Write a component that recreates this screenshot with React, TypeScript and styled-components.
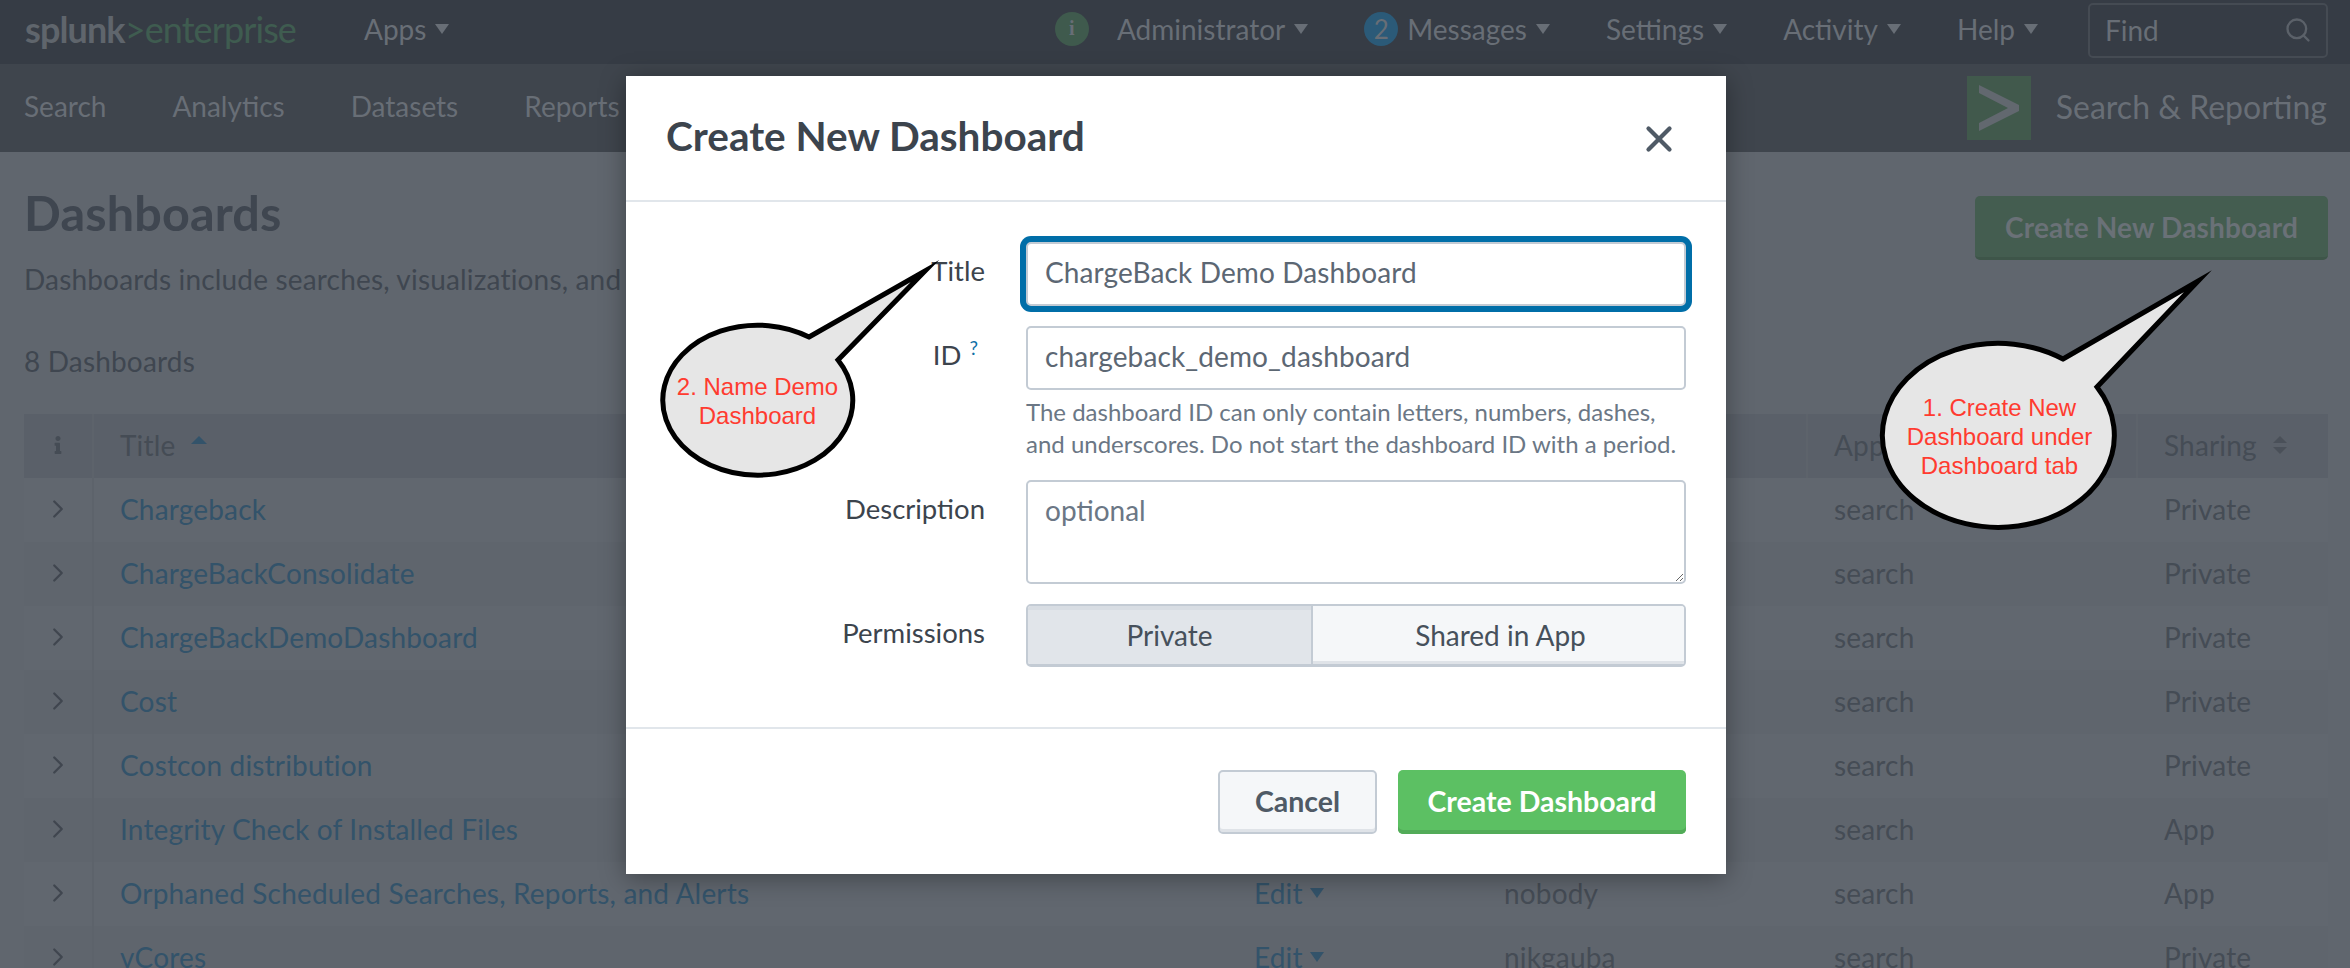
import styled, { createGlobalStyle } from "styled-components";
import { ChevronRight, Search, X } from "lucide-react";
import { FaInfo } from "react-icons/fa";

const GlobalStyle = createGlobalStyle`
  html, body {
    margin: 0;
    padding: 0;
    background: #60666e;
  }
  * { box-sizing: border-box; }
`;

const Page = styled.div`
  position: relative;
  width: 2350px;
  height: 968px;
  overflow: hidden;
  background: #60666e;
  font-family: Lato, "Liberation Sans", sans-serif;
  font-size: 28px;
  color: #3f4650;
`;

const TopBar = styled.div`
  display: flex;
  align-items: center;
  height: 64px;
  padding: 0 22px 7px 25px;
  background: #363c45;
  color: #686e76;
`;

const Logo = styled.div`
  display: flex;
  align-items: baseline;
  width: 339px;
  font-size: 36px;
  letter-spacing: -0.9px;
  font-weight: 700;
  color: #5f656c;
  span {
    color: #3f5c50;
    font-weight: 400;
  }
`;

const MenuItem = styled.div`
  display: flex;
  align-items: center;
  gap: 9px;
`;

const Caret = styled.i<{ $color?: string }>`
  display: block;
  width: 0;
  height: 0;
  border-left: 7px solid transparent;
  border-right: 7px solid transparent;
  border-top: 10px solid ${(p) => p.$color || "#686e76"};
`;

const RightMenu = styled.div`
  display: flex;
  align-items: center;
  gap: 56px;
  margin-left: auto;
`;

const Badge = styled.b<{ $bg: string; $serif?: boolean }>`
  display: flex;
  align-items: center;
  justify-content: center;
  width: 34px;
  height: 34px;
  border-radius: 50%;
  margin-right: ${(p) => (p.$serif ? "19px" : "0")};
  background: ${(p) => p.$bg};
  font-size: ${(p) => (p.$serif ? "20px" : "26px")};
  font-weight: ${(p) => (p.$serif ? 700 : 400)};
  font-family: ${(p) => (p.$serif ? '"Liberation Serif", serif' : "inherit")};
  color: #686e76;
`;

const FindBox = styled.div`
  display: flex;
  align-items: center;
  justify-content: space-between;
  width: 240px;
  height: 55px;
  padding: 0 14px 0 15px;
  border: 2px solid #454b53;
  border-radius: 5px;
  margin: 3px 0 0 -6px;
`;

const AppBar = styled.div`
  display: flex;
  align-items: center;
  height: 88px;
  padding: 0 23px 4px 24px;
  background: #3f454d;
  color: #686e76;
`;

const NavLinks = styled.div`
  display: flex;
  gap: 66px;
`;

const AppBrand = styled.div`
  display: flex;
  align-items: center;
  gap: 25px;
  margin-left: auto;
  font-size: 32px;
`;

const AppMark = styled.div`
  width: 64px;
  height: 64px;
  margin-top: 4px;
  background: #41594c;
  svg {
    display: block;
  }
`;

const Content = styled.div`
  padding: 44px 22px 0 24px;
  letter-spacing: 0.17px;
`;

const HeadRow = styled.div`
  display: flex;
  justify-content: space-between;
  height: 98px;
`;

const Heading = styled.h1`
  margin: -8px 0 0;
  font-size: 48.5px;
  line-height: 48px;
  font-weight: 700;
  color: #3f4650;
`;

const PrimaryHeaderButton = styled.div`
  display: flex;
  align-items: center;
  justify-content: center;
  width: 353px;
  height: 64px;
  border-radius: 5px;
  background: #445d50;
  border-bottom: 3px solid #3e5549;
  color: #6a7177;
  font-weight: 700;
`;

const Intro = styled.p`
  margin: -31px 0 0;
  height: 80px;
  line-height: 32px;
  white-space: nowrap;
`;

const Count = styled.div`
  height: 71px;
  line-height: 36px;
`;

const Cols = "70px 1134px 250px 330px 330px 190px";

const Row = styled.div<{ $head?: boolean; $odd?: boolean }>`
  display: grid;
  grid-template-columns: ${Cols};
  align-items: stretch;
  height: 64px;
  background: ${(p) => (p.$head ? "#5a6069" : p.$odd ? "#61676f" : "#5f656d")};
`;

const Cell = styled.div<{ $link?: boolean; $divider?: boolean; $center?: boolean }>`
  display: flex;
  align-items: center;
  gap: 7px;
  padding: 0 ${(p) => (p.$center ? "0" : "26px")} 3px;
  justify-content: ${(p) => (p.$center ? "center" : "flex-start")};
  color: ${(p) => (p.$link ? "#33536a" : "#454c55")};
  border-right: ${(p) => (p.$divider ? "2px solid #5d636b" : "0")};
  white-space: nowrap;
`;

const SortUp = styled.i`
  display: block;
  width: 0;
  height: 0;
  margin: -10px 0 0 9px;
  border-left: 8px solid transparent;
  border-right: 8px solid transparent;
  border-bottom: 8px solid #33536a;
`;

const SortBoth = styled.span`
  display: flex;
  flex-direction: column;
  gap: 4px;
  margin-left: 9px;
  &::before, &::after {
    content: "";
    display: block;
    width: 0;
    height: 0;
    border-left: 7px solid transparent;
    border-right: 7px solid transparent;
  }
  &::before { border-bottom: 7px solid #4a5059; }
  &::after { border-top: 7px solid #4a5059; }
`;

const Modal = styled.div`
  position: absolute;
  left: 626px;
  top: 76px;
  width: 1100px;
  height: 798px;
  background: #ffffff;
  box-shadow: 0 4px 24px rgba(0, 0, 0, 0.35);
  color: #3c444d;
`;

const ModalHeader = styled.div`
  display: flex;
  align-items: center;
  justify-content: space-between;
  height: 126px;
  padding: 0 46px 0 40px;
  border-bottom: 2px solid #e1e6eb;
  svg {
    margin-top: 2px;
  }
`;

const ModalTitle = styled.h2`
  margin: -5px 0 0;
  font-size: 40.5px;
  font-weight: 700;
  color: #3c444d;
`;

const ModalBody = styled.div`
  display: flex;
  flex-direction: column;
  height: 527px;
  padding: 40px 0 0;
  border-bottom: 2px solid #e1e6eb;
`;

const FormRow = styled.div<{ $gap?: number }>`
  display: grid;
  grid-template-columns: 359px 660px;
  column-gap: 41px;
  margin-bottom: ${(p) => p.$gap ?? 20}px;
`;

const Label = styled.label`
  text-align: right;
  font-size: 27.5px;
  line-height: 32px;
  padding-top: 13px;
  color: #3c444d;
  sup {
    font-size: 19px;
    line-height: 0;
    color: #0f6fa6;
    margin-left: 8px;
    margin-right: 7px;
  }
`;

const TextInput = styled.input<{ $focus?: boolean }>`
  display: block;
  width: 100%;
  height: 64px;
  padding: 0 17px 5px;
  outline: none;
  border: 2px solid #c3cbd4;
  border-radius: 5px;
  background: #fff;
  font: inherit;
  font-size: 28px;
  letter-spacing: 0.12px;
  color: #5c6773;
  box-shadow: ${(p) => (p.$focus ? "0 0 0 6px #006ea8" : "none")};
`;

const TextArea = styled.textarea`
  display: block;
  width: 100%;
  height: 104px;
  padding: 11px 17px;
  outline: none;
  border: 2px solid #c3cbd4;
  border-radius: 5px;
  font: inherit;
  font-size: 28px;
  color: #5c6773;
  &::placeholder {
    color: #6b7785;
    opacity: 1;
  }
`;

const Help = styled.div`
  grid-column: 2;
  margin-top: 6px;
  margin-bottom: 20px;
  font-size: 24px;
  line-height: 32px;
  color: #6b7785;
  white-space: nowrap;
`;

const Toggle = styled.div`
  display: grid;
  grid-template-columns: 285px 375px;
  height: 63px;
  border: 2px solid #c3cbd4;
  border-bottom-width: 3px;
  border-radius: 5px;
  overflow: hidden;
`;

const ToggleOption = styled.div<{ $on?: boolean }>`
  display: flex;
  align-items: center;
  justify-content: center;
  background: ${(p) => (p.$on ? "#e1e5ea" : "#f5f7f9")};
  border-right: ${(p) => (p.$on ? "2px solid #c3cbd4" : "0")};
  box-shadow: ${(p) =>
    p.$on ? "inset 0 4px 0 #d8dde3" : "inset 0 -3px 0 #dfe3e8"};
  color: #46505b;
`;

const ModalFooter = styled.div`
  display: flex;
  justify-content: flex-end;
  gap: 21px;
  padding: 41px 40px 0 0;
`;

const Button = styled.div<{ $primary?: boolean }>`
  display: flex;
  align-items: center;
  justify-content: center;
  width: ${(p) => (p.$primary ? "288px" : "159px")};
  height: 64px;
  padding-bottom: 2px;
  border-radius: 5px;
  font-weight: 700;
  font-size: 28.5px;
  background: ${(p) => (p.$primary ? "#5cc063" : "#f5f7f9")};
  color: ${(p) => (p.$primary ? "#ffffff" : "#4f5a66")};
  border: ${(p) => (p.$primary ? "0" : "2px solid #c3cbd4")};
  box-shadow: ${(p) =>
    p.$primary ? "inset 0 -4px 0 #52ab58" : "inset 0 -3px 0 #dfe3e8"};
`;

const Callout = styled.div<{ $left: number; $top: number; $w: number; $h: number }>`
  position: absolute;
  left: ${(p) => p.$left}px;
  top: ${(p) => p.$top}px;
  width: ${(p) => p.$w}px;
  height: ${(p) => p.$h}px;
  svg {
    display: block;
  }
`;

const CalloutText = styled.div<{ $left: number; $top: number; $w: number; $h: number }>`
  position: absolute;
  left: ${(p) => p.$left}px;
  top: ${(p) => p.$top}px;
  width: ${(p) => p.$w}px;
  height: ${(p) => p.$h}px;
  display: flex;
  align-items: center;
  justify-content: center;
  text-align: center;
  font-family: "Liberation Sans", Arial, sans-serif;
  font-size: 24px;
  line-height: 29px;
  color: #ff3b30;
`;

// rows 1-6 sit behind the modal, only the last two show their edit + owner cells
const rows = [
  { title: "Chargeback", sharing: "Private" },
  { title: "ChargeBackConsolidate", sharing: "Private" },
  { title: "ChargeBackDemoDashboard", sharing: "Private" },
  { title: "Cost", sharing: "Private" },
  { title: "Costcon distribution", sharing: "Private" },
  { title: "Integrity Check of Installed Files", sharing: "App" },
  { title: "Orphaned Scheduled Searches, Reports, and Alerts", owner: "nobody", sharing: "App" },
  { title: "vCores", owner: "nikgauba", sharing: "Private" },
];

const menu = ["Settings", "Activity", "Help"];
const nav = ["Search", "Analytics", "Datasets", "Reports"];

export default function App() {
  return (
    <Page>
      <GlobalStyle />
      <TopBar>
        <Logo>
          splunk<span>&gt;enterprise</span>
        </Logo>
        <MenuItem>
          Apps <Caret />
        </MenuItem>
        <RightMenu>
          <MenuItem>
            <Badge $bg="#3f5a4d" $serif>i</Badge>
            Administrator <Caret />
          </MenuItem>
          <MenuItem>
            <Badge $bg="#2b5a78">2</Badge>
            Messages <Caret />
          </MenuItem>
          {menu.map((m) => (
            <MenuItem key={m}>
              {m} <Caret />
            </MenuItem>
          ))}
          <FindBox>
            Find
            <Search size={28} color="#5b6169" />
          </FindBox>
        </RightMenu>
      </TopBar>

      <AppBar>
        <NavLinks>
          {nav.map((n) => (
            <span key={n}>{n}</span>
          ))}
        </NavLinks>
        <AppBrand>
          <AppMark>
            <svg width="64" height="64" viewBox="0 0 64 64">
              <path d="M12 9 L52 29 V35 L12 55 V47 L41 32 L12 17 Z" fill="#62686f" />
            </svg>
          </AppMark>
          Search &amp; Reporting
        </AppBrand>
      </AppBar>

      <Content>
        <HeadRow>
          <Heading>Dashboards</Heading>
          <PrimaryHeaderButton>Create New Dashboard</PrimaryHeaderButton>
        </HeadRow>
        <Intro>Dashboards include searches, visualizations, and</Intro>
        <Count>8 Dashboards</Count>
        <Row $head>
          <Cell $center $divider>
            <FaInfo size={18} color="#454c55" />
          </Cell>
          <Cell>
            Title <SortUp />
          </Cell>
          <Cell />
          <Cell $divider />
          <Cell $divider>App</Cell>
          <Cell>
            Sharing <SortBoth />
          </Cell>
        </Row>
        {rows.map((row, i) => (
          <Row key={row.title} $odd={i % 2 === 0}>
            <Cell $center $divider>
              <ChevronRight size={30} strokeWidth={1.8} color="#40464f" />
            </Cell>
            <Cell $link>{row.title}</Cell>
            <Cell $link>
              {row.owner && (
                <>
                  Edit <Caret $color="#33536a" />
                </>
              )}
            </Cell>
            <Cell>{row.owner}</Cell>
            <Cell>search</Cell>
            <Cell>{row.sharing}</Cell>
          </Row>
        ))}
      </Content>

      <Modal>
        <ModalHeader>
          <ModalTitle>Create New Dashboard</ModalTitle>
          <X size={42} strokeWidth={2.4} color="#4f5a66" />
        </ModalHeader>
        <ModalBody>
          <FormRow>
            <Label>Title</Label>
            <TextInput $focus readOnly value="ChargeBack Demo Dashboard" />
          </FormRow>
          <FormRow $gap={0}>
            <Label>
              ID<sup>?</sup>
            </Label>
            <TextInput readOnly value="chargeback_demo_dashboard" />
            <Help>
              The dashboard ID can only contain letters, numbers, dashes,
              <br />
              and underscores. Do not start the dashboard ID with a period.
            </Help>
          </FormRow>
          <FormRow>
            <Label>Description</Label>
            <TextArea placeholder="optional" />
          </FormRow>
          <FormRow>
            <Label>Permissions</Label>
            <Toggle>
              <ToggleOption $on>Private</ToggleOption>
              <ToggleOption>Shared in App</ToggleOption>
            </Toggle>
          </FormRow>
        </ModalBody>
        <ModalFooter>
          <Button>Cancel</Button>
          <Button $primary>Create Dashboard</Button>
        </ModalFooter>
      </Modal>

      <Callout $left={655} $top={255} $w={285} $h={230}>
        <svg width="285" height="230" viewBox="655 255 285 230">
          <path
            d="M809 337 L925 271 L838 360 A95 75 0 1 1 809 337 Z"
            fill="#e6e6e6"
            stroke="#000"
            strokeWidth="5"
            strokeMiterlimit="20"
          />
        </svg>
        <CalloutText $left={5} $top={69} $w={195} $h={154}>
          2. Name Demo
          <br />
          Dashboard
        </CalloutText>
      </Callout>

      <Callout $left={1875} $top={265} $w={340} $h={270}>
        <svg width="340" height="270" viewBox="1875 265 340 270">
          <path
            d="M2063 359 L2198 281 L2097 387 A116 92 0 1 1 2063 359 Z"
            fill="#e6e6e6"
            stroke="#000"
            strokeWidth="5"
            strokeMiterlimit="20"
          />
        </svg>
        <CalloutText $left={6} $top={77} $w={237} $h={188}>
          1. Create New
          <br />
          Dashboard under
          <br />
          Dashboard tab
        </CalloutText>
      </Callout>
    </Page>
  );
}
